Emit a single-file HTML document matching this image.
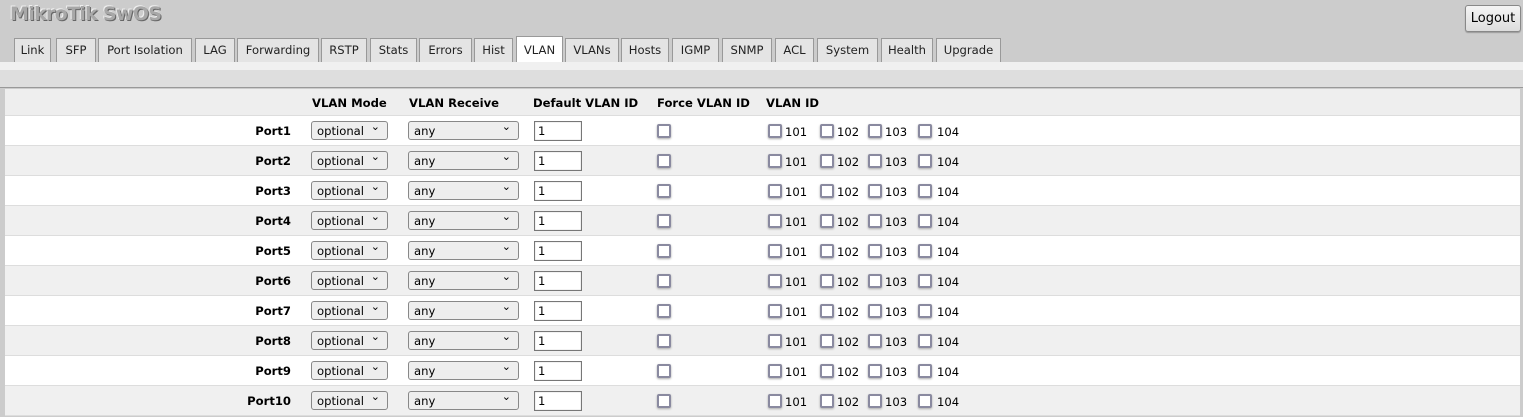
<!DOCTYPE html>
<html><head><meta charset="utf-8"><style>
*{box-sizing:border-box}
body{margin:0;width:1523px;height:417px;overflow:hidden;background:#ccc;font-family:Verdana,"DejaVu Sans",sans-serif;font-size:11.6px;color:#000;position:relative}
.logo{position:absolute;left:10px;top:3px;font:bold 19px "DejaVu Sans",sans-serif;color:#a8a8a8;letter-spacing:-0.7px;text-shadow:1px 1px 0 #666,-1px -1px 0 #eee}
.logout{position:absolute;left:1465px;top:5px;width:56px;height:27px;border:1px solid #888;border-radius:3px;background:linear-gradient(#f4f4f4,#ddd);font-size:13px;text-align:center;line-height:25px;box-shadow:0 1px 1px #999}
.tab{position:absolute;top:38px;height:24px;border:1px solid #999;border-bottom:none;background:#e4e4e4;text-align:center;line-height:22px;font-size:11.6px;color:#222}
.tab.act{top:36px;height:26px;background:#fff;line-height:26px}
.strip1{position:absolute;left:0;top:62px;width:1523px;height:8px;background:#f0f0f0}
.strip2{position:absolute;left:0;top:70px;width:1523px;height:18px;background:#dedede;border-bottom:1px solid #999}
.tbl{position:absolute;left:5px;top:89px;width:1515px}
.hdr{position:relative;height:27px;background:#eee;border-bottom:1px solid #ddd;font-weight:bold}
.hdr span{position:absolute;top:7px}
.row{position:relative;height:30px;border-bottom:1px solid #ddd;background:#fff}
.row.g{background:#f0f0f0}
.row>*{position:absolute}
.pl{right:1229px;top:8px;font-weight:bold}
.sel{top:5px;height:19px;border:1px solid #888;border-radius:3px;background:#eee;padding-left:5px;line-height:18px}
.sel:after{content:"⌄";position:absolute;right:7px;top:-4px;font-size:11px}
.inp{left:529px;top:5px;width:48px;height:20px;border:1px solid #777;background:#fff;padding-left:3px;line-height:19px;box-shadow:inset 0 0 1px #aaa}
.cb{top:8px;width:14px;height:14px;border:2px solid #8a8aa0;border-radius:2px;background:#fff;box-shadow:0 1px 2px #aaa}
.lb{top:9px}
</style></head><body>
<div class="logo">MikroTik SwOS</div>
<div class="logout">Logout</div>
<div class="tab" style="left:14px;width:37px">Link</div>
<div class="tab" style="left:56px;width:40px">SFP</div>
<div class="tab" style="left:98px;width:94px">Port Isolation</div>
<div class="tab" style="left:195px;width:40px">LAG</div>
<div class="tab" style="left:237px;width:82px">Forwarding</div>
<div class="tab" style="left:321px;width:46px">RSTP</div>
<div class="tab" style="left:370px;width:47px">Stats</div>
<div class="tab" style="left:419px;width:53px">Errors</div>
<div class="tab" style="left:474px;width:39px">Hist</div>
<div class="tab act" style="left:516px;width:47px">VLAN</div>
<div class="tab" style="left:565px;width:54px">VLANs</div>
<div class="tab" style="left:621px;width:48px">Hosts</div>
<div class="tab" style="left:672px;width:47px">IGMP</div>
<div class="tab" style="left:722px;width:50px">SNMP</div>
<div class="tab" style="left:775px;width:39px">ACL</div>
<div class="tab" style="left:817px;width:61px">System</div>
<div class="tab" style="left:881px;width:52px">Health</div>
<div class="tab" style="left:936px;width:65px">Upgrade</div>
<div class="strip1"></div><div class="strip2"></div>
<div class="tbl">
<div class="hdr"><span style="left:307px">VLAN Mode</span><span style="left:404px">VLAN Receive</span><span style="left:528px">Default VLAN ID</span><span style="left:652px">Force VLAN ID</span><span style="left:761px">VLAN ID</span></div>
<div class="row"><span class="pl">Port1</span><span class="sel" style="left:306px;width:77px">optional</span><span class="sel" style="left:403px;width:111px">any</span><span class="inp">1</span><span class="cb" style="left:652px"></span><span class="cb" style="left:763px"></span><span class="lb" style="left:780px">101</span><span class="cb" style="left:815px"></span><span class="lb" style="left:832px">102</span><span class="cb" style="left:863px"></span><span class="lb" style="left:880px">103</span><span class="cb" style="left:913px"></span><span class="lb" style="left:932px">104</span></div>
<div class="row g"><span class="pl">Port2</span><span class="sel" style="left:306px;width:77px">optional</span><span class="sel" style="left:403px;width:111px">any</span><span class="inp">1</span><span class="cb" style="left:652px"></span><span class="cb" style="left:763px"></span><span class="lb" style="left:780px">101</span><span class="cb" style="left:815px"></span><span class="lb" style="left:832px">102</span><span class="cb" style="left:863px"></span><span class="lb" style="left:880px">103</span><span class="cb" style="left:913px"></span><span class="lb" style="left:932px">104</span></div>
<div class="row"><span class="pl">Port3</span><span class="sel" style="left:306px;width:77px">optional</span><span class="sel" style="left:403px;width:111px">any</span><span class="inp">1</span><span class="cb" style="left:652px"></span><span class="cb" style="left:763px"></span><span class="lb" style="left:780px">101</span><span class="cb" style="left:815px"></span><span class="lb" style="left:832px">102</span><span class="cb" style="left:863px"></span><span class="lb" style="left:880px">103</span><span class="cb" style="left:913px"></span><span class="lb" style="left:932px">104</span></div>
<div class="row g"><span class="pl">Port4</span><span class="sel" style="left:306px;width:77px">optional</span><span class="sel" style="left:403px;width:111px">any</span><span class="inp">1</span><span class="cb" style="left:652px"></span><span class="cb" style="left:763px"></span><span class="lb" style="left:780px">101</span><span class="cb" style="left:815px"></span><span class="lb" style="left:832px">102</span><span class="cb" style="left:863px"></span><span class="lb" style="left:880px">103</span><span class="cb" style="left:913px"></span><span class="lb" style="left:932px">104</span></div>
<div class="row"><span class="pl">Port5</span><span class="sel" style="left:306px;width:77px">optional</span><span class="sel" style="left:403px;width:111px">any</span><span class="inp">1</span><span class="cb" style="left:652px"></span><span class="cb" style="left:763px"></span><span class="lb" style="left:780px">101</span><span class="cb" style="left:815px"></span><span class="lb" style="left:832px">102</span><span class="cb" style="left:863px"></span><span class="lb" style="left:880px">103</span><span class="cb" style="left:913px"></span><span class="lb" style="left:932px">104</span></div>
<div class="row g"><span class="pl">Port6</span><span class="sel" style="left:306px;width:77px">optional</span><span class="sel" style="left:403px;width:111px">any</span><span class="inp">1</span><span class="cb" style="left:652px"></span><span class="cb" style="left:763px"></span><span class="lb" style="left:780px">101</span><span class="cb" style="left:815px"></span><span class="lb" style="left:832px">102</span><span class="cb" style="left:863px"></span><span class="lb" style="left:880px">103</span><span class="cb" style="left:913px"></span><span class="lb" style="left:932px">104</span></div>
<div class="row"><span class="pl">Port7</span><span class="sel" style="left:306px;width:77px">optional</span><span class="sel" style="left:403px;width:111px">any</span><span class="inp">1</span><span class="cb" style="left:652px"></span><span class="cb" style="left:763px"></span><span class="lb" style="left:780px">101</span><span class="cb" style="left:815px"></span><span class="lb" style="left:832px">102</span><span class="cb" style="left:863px"></span><span class="lb" style="left:880px">103</span><span class="cb" style="left:913px"></span><span class="lb" style="left:932px">104</span></div>
<div class="row g"><span class="pl">Port8</span><span class="sel" style="left:306px;width:77px">optional</span><span class="sel" style="left:403px;width:111px">any</span><span class="inp">1</span><span class="cb" style="left:652px"></span><span class="cb" style="left:763px"></span><span class="lb" style="left:780px">101</span><span class="cb" style="left:815px"></span><span class="lb" style="left:832px">102</span><span class="cb" style="left:863px"></span><span class="lb" style="left:880px">103</span><span class="cb" style="left:913px"></span><span class="lb" style="left:932px">104</span></div>
<div class="row"><span class="pl">Port9</span><span class="sel" style="left:306px;width:77px">optional</span><span class="sel" style="left:403px;width:111px">any</span><span class="inp">1</span><span class="cb" style="left:652px"></span><span class="cb" style="left:763px"></span><span class="lb" style="left:780px">101</span><span class="cb" style="left:815px"></span><span class="lb" style="left:832px">102</span><span class="cb" style="left:863px"></span><span class="lb" style="left:880px">103</span><span class="cb" style="left:913px"></span><span class="lb" style="left:932px">104</span></div>
<div class="row g"><span class="pl">Port10</span><span class="sel" style="left:306px;width:77px">optional</span><span class="sel" style="left:403px;width:111px">any</span><span class="inp">1</span><span class="cb" style="left:652px"></span><span class="cb" style="left:763px"></span><span class="lb" style="left:780px">101</span><span class="cb" style="left:815px"></span><span class="lb" style="left:832px">102</span><span class="cb" style="left:863px"></span><span class="lb" style="left:880px">103</span><span class="cb" style="left:913px"></span><span class="lb" style="left:932px">104</span></div>
</div>
</body></html>
